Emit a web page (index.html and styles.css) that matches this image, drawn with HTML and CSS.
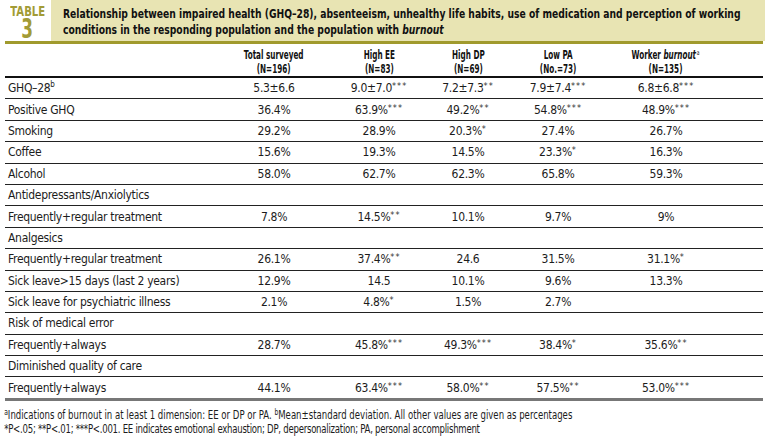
FILE: index.html
```html
<!DOCTYPE html>
<html>
<head>
<meta charset="utf-8">
<link rel="stylesheet" href="styles.css">
</head>
<body>
<div class="top">
  <div class="tag"><span class="tag-word">TABLE</span><span class="tag-num">3</span></div>
  <div class="band"><div class="band-text">Relationship between impaired health (GHQ–28), absenteeism, unhealthy life habits, use of medication and perception of working conditions in the responding population and the population with <i>burnout</i></div></div>
</div>
<div class="rule"></div>
<table class="data">
  <colgroup>
    <col class="c-label"><col class="c1"><col class="c2"><col class="c3"><col class="c4"><col class="c5"><col class="c6">
  </colgroup>
  <thead>
    <tr>
      <th></th>
      <th><span class="h">Total surveyed<br>(N=196)</span></th>
      <th><span class="h">High EE<br>(N=83)</span></th>
      <th><span class="h">High DP<br>(N=69)</span></th>
      <th><span class="h">Low PA<br>(No.=73)</span></th>
      <th><span class="h">Worker <i>burnout</i><sup class="fa">a</sup><br>(N=135)</span></th>
      <th></th>
    </tr>
  </thead>
  <tbody>
    <tr><td>GHQ–28<sup class="fb">b</sup></td><td>5.3±6.6</td><td>9.0±7.0<sup class="st">***</sup></td><td>7.2±7.3<sup class="st">**</sup></td><td>7.9±7.4<sup class="st">***</sup></td><td>6.8±6.8<sup class="st">***</sup></td><td></td></tr>
    <tr><td>Positive GHQ</td><td>36.4%</td><td>63.9%<sup class="st">***</sup></td><td>49.2%<sup class="st">**</sup></td><td>54.8%<sup class="st">***</sup></td><td>48.9%<sup class="st">***</sup></td><td></td></tr>
    <tr><td>Smoking</td><td>29.2%</td><td>28.9%</td><td>20.3%<sup class="st">*</sup></td><td>27.4%</td><td>26.7%</td><td></td></tr>
    <tr><td>Coffee</td><td>15.6%</td><td>19.3%</td><td>14.5%</td><td>23.3%<sup class="st">*</sup></td><td>16.3%</td><td></td></tr>
    <tr><td>Alcohol</td><td>58.0%</td><td>62.7%</td><td>62.3%</td><td>65.8%</td><td>59.3%</td><td></td></tr>
    <tr><td>Antidepressants/Anxiolytics</td><td></td><td></td><td></td><td></td><td></td><td></td></tr>
    <tr><td>Frequently+regular treatment</td><td>7.8%</td><td>14.5%<sup class="st">**</sup></td><td>10.1%</td><td>9.7%</td><td>9%</td><td></td></tr>
    <tr><td>Analgesics</td><td></td><td></td><td></td><td></td><td></td><td></td></tr>
    <tr><td>Frequently+regular treatment</td><td>26.1%</td><td>37.4%<sup class="st">**</sup></td><td>24.6</td><td>31.5%</td><td>31.1%<sup class="st">*</sup></td><td></td></tr>
    <tr><td>Sick leave&gt;15 days (last 2 years)</td><td>12.9%</td><td>14.5</td><td>10.1%</td><td>9.6%</td><td>13.3%</td><td></td></tr>
    <tr><td>Sick leave for psychiatric illness</td><td>2.1%</td><td>4.8%<sup class="st">*</sup></td><td>1.5%</td><td>2.7%</td><td></td><td></td></tr>
    <tr><td>Risk of medical error</td><td></td><td></td><td></td><td></td><td></td><td></td></tr>
    <tr><td>Frequently+always</td><td>28.7%</td><td>45.8%<sup class="st">***</sup></td><td>49.3%<sup class="st">***</sup></td><td>38.4%<sup class="st">*</sup></td><td>35.6%<sup class="st">**</sup></td><td></td></tr>
    <tr><td>Diminished quality of care</td><td></td><td></td><td></td><td></td><td></td><td></td></tr>
    <tr class="last"><td>Frequently+always</td><td>44.1%</td><td>63.4%<sup class="st">***</sup></td><td>58.0%<sup class="st">**</sup></td><td>57.5%<sup class="st">**</sup></td><td>53.0%<sup class="st">***</sup></td><td></td></tr>
  </tbody>
</table>
<div class="notes">
  <p><sup class="fn">a</sup>Indications of burnout in at least 1 dimension: EE or DP or PA. <sup class="fn">b</sup>Mean±standard deviation. All other values are given as percentages</p>
  <p class="n2">*P&lt;.05; **P&lt;.01; ***P&lt;.001. EE indicates emotional exhaustion; DP, depersonalization; PA, personal accomplishment</p>
</div>
</body>
</html>
```

FILE: styles.css
```css
html, body {
  margin: 0;
  padding: 0;
  background: #ffffff;
}
body {
  font-family: "DejaVu Sans Condensed", "Liberation Sans", sans-serif;
  font-stretch: condensed;
  color: #1c1c1c;
  width: 770px;
  height: 447px;
  overflow: hidden;
}
.top {
  display: flex;
  width: 765px;
  height: 41px;
}
.tag {
  width: 51px;
  display: flex;
  flex-direction: column;
  align-items: center;
  padding-left: 4px;
  box-sizing: border-box;
  color: #a29b36;
  font-weight: bold;
}
.tag-word {
  font-size: 14px;
  line-height: 14px;
  margin-top: 4px;
  transform: scaleX(0.8);
}
.tag-num {
  font-size: 26px;
  line-height: 23px;
  transform: scaleX(0.72);
}
.band {
  flex: 1;
  background: #e8e4b3;
  padding: 6px 0 0 12px;
  overflow: hidden;
}
.band-text {
  width: 877px;
  font-weight: bold;
  font-size: 13px;
  line-height: 16px;
  color: #111;
  transform: scaleX(0.787);
  transform-origin: left top;
}
.rule {
  margin-left: 5px;
  width: 758px;
  height: 3px;
  background: #a09a2d;
}
.data {
  margin-left: 5px;
  width: 758px;
  border-collapse: collapse;
  table-layout: fixed;
  font-size: 12px;
  letter-spacing: -0.3px;
}
.c-label { width: 215px; }
.c1 { width: 108px; }
.c2 { width: 102px; }
.c3 { width: 76px; }
.c4 { width: 104px; }
.c5 { width: 112px; }
.c6 { width: 41px; }
.data th {
  font-weight: bold;
  font-size: 11.5px;
  line-height: 14px;
  height: 32px;
  vertical-align: bottom;
  padding: 0;
  text-align: center;
  border-bottom: 2px solid #111;
  color: #111;
  letter-spacing: 0;
}
.h {
  display: inline-block;
  transform: scaleX(0.7);
  white-space: nowrap;
}
.data td {
  height: 20.4px;
  padding: 0;
  text-align: center;
  border-bottom: 1px solid #222;
  line-height: 14px;
  white-space: nowrap;
}
.data td:first-child {
  text-align: left;
  padding-left: 3px;
}
.data tr.last td {
  border-bottom: 3px solid #777;
}
.st {
  font-size: 9px;
  letter-spacing: 1px;
  vertical-align: 3px;
  line-height: 0;
  color: #333;
}
.fb {
  font-size: 8px;
  vertical-align: 5px;
  line-height: 0;
}
.fa {
  font-size: 7px;
  font-weight: normal;
  vertical-align: 4px;
  line-height: 0;
  margin-left: 1px;
}
.notes {
  padding: 7px 0 0 5px;
  font-size: 11.4px;
  line-height: 14px;
  transform: scaleX(0.835);
  transform-origin: left top;
}
.notes p {
  margin: 0;
  white-space: nowrap;
}
.notes .n2 {
  letter-spacing: -0.3px;
}
.fn {
  font-size: 8px;
  vertical-align: 4px;
  line-height: 0;
}
```
